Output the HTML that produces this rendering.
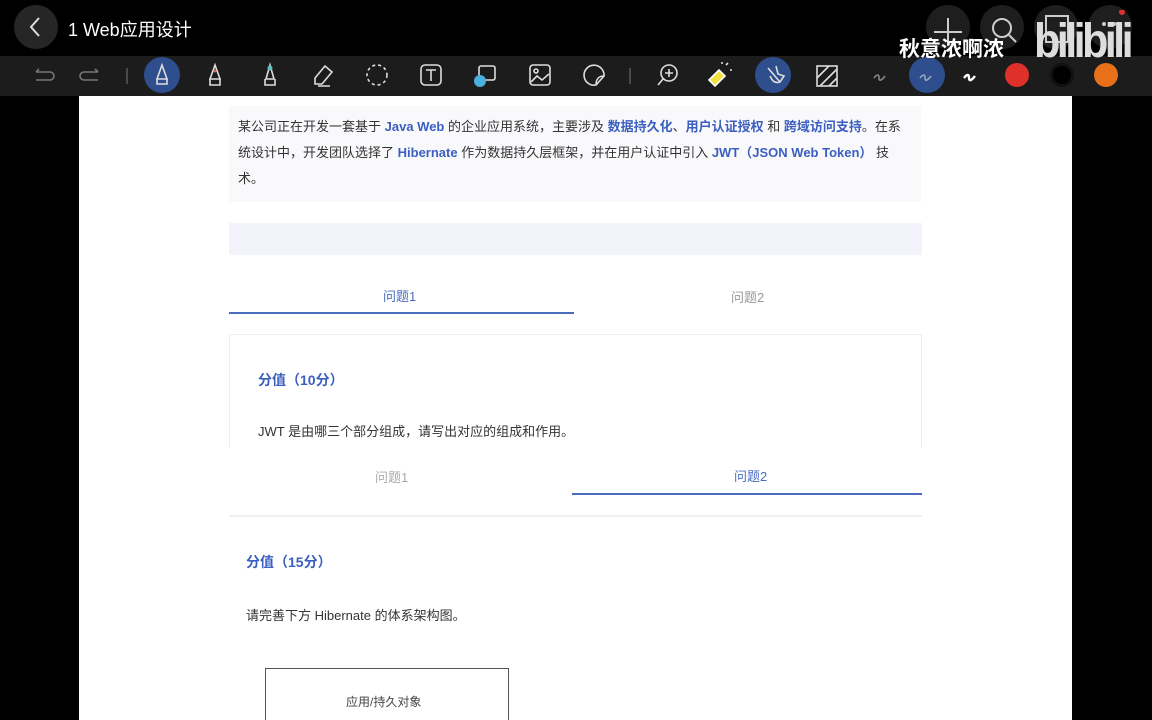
<!DOCTYPE html>
<html><head><meta charset="utf-8"><style>
*{margin:0;padding:0;box-sizing:border-box}
body{width:1152px;height:720px;background:#000;position:relative;overflow:hidden;font-family:"Liberation Sans","Noto Sans CJK SC",sans-serif}
.abs{position:absolute}
.circ{position:absolute;border-radius:50%}
.page{position:absolute;left:79px;top:96px;width:993px;height:624px;background:#fff;overflow:hidden}
.b{color:#3b5fc0;font-weight:bold}
.t{font-size:13px;color:#333}
</style></head><body>
<!-- top bar -->
<div class="circ" style="left:14px;top:5px;width:44px;height:44px;background:#262626"></div>
<svg class="abs" style="left:26px;top:15px" width="20" height="24"><path d="M13 3 L5 12 L13 21" stroke="#ddd" stroke-width="2" fill="none"/></svg>
<div class="abs" style="left:68px;top:16px;color:#fff;font-size:18px">1 Web应用设计</div>
<div class="circ" style="left:926px;top:5px;width:44px;height:44px;background:#1e1e1e"></div>
<div class="circ" style="left:980px;top:5px;width:44px;height:44px;background:#1e1e1e"></div>
<div class="circ" style="left:1034px;top:5px;width:44px;height:44px;background:#1e1e1e"></div>
<div class="circ" style="left:1088px;top:5px;width:44px;height:44px;background:#1e1e1e"></div>
<svg class="abs" style="left:930px;top:10px" width="200" height="40"><path d="M18 8v28M4 22h28" stroke="#ccc" stroke-width="2"/><circle cx="72" cy="18" r="9" stroke="#ccc" stroke-width="2" fill="none"/><path d="M79 25l7 7" stroke="#ccc" stroke-width="2"/><rect x="116" y="6" width="22" height="26" stroke="#ccc" stroke-width="2" fill="none"/><circle cx="174" cy="14" r="2" fill="#ccc"/><circle cx="184" cy="14" r="2" fill="#ccc"/><circle cx="192" cy="2" r="3" fill="#e03030"/></svg>
<!-- toolbar -->
<div class="abs" style="left:0;top:56px;width:1152px;height:40px;background:#1c1c1c"></div>
<div class="circ" style="left:144px;top:57px;width:36px;height:36px;background:#2e4e8e"></div>
<div class="circ" style="left:755px;top:57px;width:36px;height:36px;background:#2e4e8e"></div>
<div class="circ" style="left:909px;top:57px;width:36px;height:36px;background:#2e4e8e"></div>
<div class="circ" style="left:1005px;top:63px;width:24px;height:24px;background:#e0302a"></div>
<div class="circ" style="left:1050px;top:63px;width:24px;height:24px;background:#000;border:3px solid #111"></div>
<div class="circ" style="left:1094px;top:63px;width:24px;height:24px;background:#e8701a"></div>
<svg class="abs" style="left:0;top:56px" width="1152" height="40" fill="none" stroke="#ddd" stroke-width="1.6">
<path d="M36 16h14a4 4 0 0 1 0 8H36M36 16l3-3" stroke="#777"/>
<path d="M98 16H84a4 4 0 0 0 0 8h14M98 16l-3-3" stroke="#777"/>
<path d="M127 12v16" stroke="#555"/>
<path d="M162 9l-5 14h10zM157 23v5h10v-5" />
<path d="M215 9l-5 14h10zM210 23v6h10v-6" /><circle cx="215" cy="15" r="1.5" fill="#e06060" stroke="none"/>
<path d="M270 9l-4 14h8zM265 23v6h10v-6"/><circle cx="270" cy="12" r="2.5" fill="#60c0c0" stroke="none"/>
<path d="M315 22l10-12 7 6-10 12h-7zM318 30h12"/>
<circle cx="377" cy="19" r="10" stroke-dasharray="3 3"/>
<rect x="421" y="9" width="20" height="20" rx="4"/><path d="M426 14h10M431 14v11"/>
<rect x="479" y="10" width="16" height="14" rx="2"/><circle cx="480" cy="25" r="6" fill="#4ab0e0" stroke="none"/>
<rect x="530" y="9" width="20" height="20" rx="3"/><path d="M531 26l6-6 5 4 7-6"/><circle cx="536" cy="15" r="2"/>
<path d="M604 20a10 10 0 1 0-8 9l8-9zM596 29c0-6 3-9 8-9"/>
<path d="M630 12v16" stroke="#555"/>
<circle cx="669" cy="17" r="8"/><path d="M663 23l-5 6M669 13v8M665 17h8"/>
<path d="M709 24l10-10 6 6-10 10z" fill="#f0e040" stroke="#fff"/><path d="M726 9l2-2M730 14h2M722 8v-2"/>
<path d="M768 12l12 14M770 20c2 4 4 8 10 6l4-6-6-2-2-8"/>
<rect x="817" y="10" width="20" height="20"/><path d="M817 22l12-12M820 30l17-17M829 30l8-8"/>
<path d="M874 22c3-4 5-4 5 0s3 2 6-2" stroke="#888"/>
<path d="M920 22c3-4 5-4 5 0s3 2 6-2" stroke="#9ab"/>
<path d="M964 22c3-4 5-4 5 0s3 2 6-2" stroke="#fff" stroke-width="2.4"/>
</svg>
<!-- watermark -->
<div class="abs" style="left:899px;top:34px;color:#fff;font-size:21px;font-weight:bold;z-index:5;font-family:'Noto Sans CJK SC',sans-serif;line-height:28px">秋意浓啊浓</div>
<div class="abs" style="left:1034px;top:16px;color:#ddd;font-size:48px;font-weight:bold;letter-spacing:-4px;z-index:5;line-height:52px;transform:scaleX(0.9);transform-origin:left">bilibili</div>
<!-- page -->
<div class="page">
  <div class="abs" style="left:150px;top:10px;width:692px;height:96px;background:#f9f9fc"></div>
  <div class="abs t" style="left:159px;top:18px;width:670px;line-height:26px;font-size:13px">某公司正在开发一套基于 <span class="b">Java Web</span> 的企业应用系统，主要涉及 <span class="b">数据持久化</span>、<span class="b">用户认证授权</span> 和 <span class="b">跨域访问支持</span>。在系统设计中，开发团队选择了 <span class="b">Hibernate</span> 作为数据持久层框架，并在用户认证中引入 <span class="b">JWT（JSON Web Token）</span> 技术。</div>
  <div class="abs" style="left:150px;top:127px;width:693px;height:32px;background:#f3f3fc"></div>
  <div class="abs" style="left:304px;top:190px;font-size:13px;color:#4a6bc0">问题1</div>
  <div class="abs" style="left:652px;top:191px;font-size:13px;color:#999">问题2</div>
  <div class="abs" style="left:150px;top:216px;width:345px;height:2px;background:#4a6bc0"></div>
  <div class="abs" style="left:150px;top:238px;width:693px;height:114px;border:1px solid #eee;border-bottom:none"></div>
  <div class="abs b" style="left:179px;top:274px;font-size:14px">分值（10分）</div>
  <div class="abs t" style="left:179px;top:325px">JWT 是由哪三个部分组成，请写出对应的组成和作用。</div>
  <div class="abs" style="left:296px;top:371px;font-size:13px;color:#aaa">问题1</div>
  <div class="abs" style="left:655px;top:370px;font-size:13px;color:#4a6bc0">问题2</div>
  <div class="abs" style="left:493px;top:397px;width:350px;height:2px;background:#4a6bc0"></div>
  <div class="abs" style="left:150px;top:419px;width:693px;height:2px;background:#f0f0f0"></div>
  <div class="abs b" style="left:167px;top:456px;font-size:14px">分值（15分）</div>
  <div class="abs t" style="left:167px;top:509px">请完善下方 Hibernate 的体系架构图。</div>
  <div class="abs" style="left:186px;top:572px;width:244px;height:70px;border:1.5px solid #555"></div>
  <div class="abs" style="left:267px;top:597px;font-size:12px;color:#444">应用/持久对象</div>
</div>
</body></html>
